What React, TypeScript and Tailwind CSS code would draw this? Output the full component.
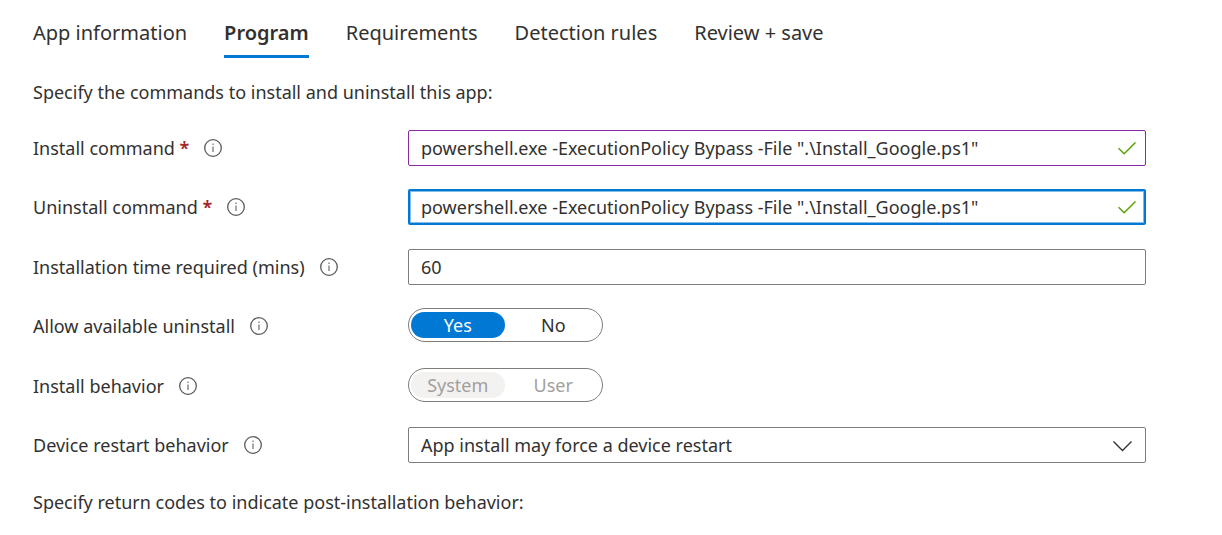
import { useState } from "react";
import type { ReactNode } from "react";

const tabs = ["App information", "Program", "Requirements", "Detection rules", "Review + save"];

function InfoIcon() {
  return (
    <svg width="18" height="18" viewBox="0 0 18 18" fill="none" aria-hidden="true">
      <circle cx="9" cy="9" r="8.3" stroke="#5c5a58" strokeWidth="1.3" />
      <path d="M9 7.5V13" stroke="#7a7876" strokeWidth="1.3" />
      <path d="M9 4.5V6" stroke="#7a7876" strokeWidth="1.3" />
    </svg>
  );
}

function CheckIcon() {
  return (
    <svg
      className="pointer-events-none absolute top-3 right-2.5"
      width="18"
      height="13"
      viewBox="0 0 18 13"
      fill="none"
      aria-hidden="true"
    >
      <path d="M0.5 6.3L6.2 11.8L17.5 0.5" stroke="#57a300" strokeWidth="1.5" />
    </svg>
  );
}

type RowProps = {
  label: string;
  htmlFor?: string;
  required?: boolean;
  children: ReactNode;
};

function Row({ label, htmlFor, required, children }: RowProps) {
  return (
    <div className="flex h-9">
      <div className="flex w-[375px] shrink-0 items-center">
        <label htmlFor={htmlFor}>
          {label}
          {required && <span className="font-semibold text-[#a4262c]"> *</span>}
        </label>
        <button type="button" aria-label={`About ${label}`} className="ml-[15px]">
          <InfoIcon />
        </button>
      </div>
      <div className="relative flex-1">{children}</div>
    </div>
  );
}

type ToggleProps = {
  name: string;
  label: string;
  options: string[];
  disabled?: boolean;
};

function Toggle({ name, label, options, disabled }: ToggleProps) {
  const [value, setValue] = useState(options[0]);

  return (
    <div
      role="radiogroup"
      aria-label={label}
      className="grid h-[34px] w-[195px] grid-cols-2 gap-0.5 rounded-full border border-[#7f7d7b] px-0.5 py-[3px]"
    >
      {options.map((option) => (
        <label
          key={option}
          className="relative flex items-center justify-center rounded-full has-checked:bg-[#0078d4] has-checked:text-white has-disabled:text-[#a19f9d] has-checked:has-disabled:bg-[#f3f2f1] has-checked:has-disabled:text-[#a19f9d]"
        >
          <input
            type="radio"
            name={name}
            className="sr-only"
            disabled={disabled}
            checked={value === option}
            onChange={() => setValue(option)}
          />
          {option}
        </label>
      ))}
    </div>
  );
}

export default function App() {
  const [install, setInstall] = useState('powershell.exe -ExecutionPolicy Bypass -File ".\\Install_Google.ps1"');
  const [uninstall, setUninstall] = useState('powershell.exe -ExecutionPolicy Bypass -File ".\\Install_Google.ps1"');
  const [minutes, setMinutes] = useState("60");

  return (
    <main className="bg-white pr-[76px] pb-5 pl-[33px] font-['Segoe_UI','Noto_Sans',sans-serif] text-[18px] leading-6 text-[#323130]">
      <nav className="flex gap-[37px] pt-[21px] text-[20px]">
        {tabs.map((tab) => (
          <a
            key={tab}
            href="#"
            className={
              tab === "Program"
                ? "border-b-3 border-[#0078d4] pb-2.5 font-semibold"
                : "border-b-3 border-transparent pb-2.5"
            }
          >
            {tab}
          </a>
        ))}
      </nav>

      <p className="mt-[22px]">Specify the commands to install and uninstall this app:</p>

      <form className="mt-[26px] flex flex-col gap-6">
        <div className="flex flex-col gap-[23px]">
          <Row label="Install command" htmlFor="install" required>
            <input
              id="install"
              className="h-9 w-full rounded-xs border border-[#8a2da5] pr-10 pl-3 outline-none"
              value={install}
              onChange={(e) => setInstall(e.target.value)}
            />
            <CheckIcon />
          </Row>
          <Row label="Uninstall command" htmlFor="uninstall" required>
            <input
              id="uninstall"
              className="h-9 w-full rounded-xs border-2 border-[#0078d4] pr-10 pl-[11px] inset-shadow-[0_0_0_1px_#80bbe9] outline-none"
              value={uninstall}
              onChange={(e) => setUninstall(e.target.value)}
            />
            <CheckIcon />
          </Row>
        </div>
        <div className="flex flex-col gap-[23px]">
          <Row label="Installation time required (mins)" htmlFor="minutes">
            <input
              id="minutes"
              className="h-9 w-full rounded-xs border border-[#7f7d7b] px-3 outline-none"
              value={minutes}
              onChange={(e) => setMinutes(e.target.value)}
            />
          </Row>
          <Row label="Allow available uninstall">
            <Toggle name="allow-uninstall" label="Allow available uninstall" options={["Yes", "No"]} />
          </Row>
        </div>
        <div className="flex flex-col gap-[23px]">
          <Row label="Install behavior">
            <Toggle name="install-behavior" label="Install behavior" options={["System", "User"]} disabled />
          </Row>
          <Row label="Device restart behavior" htmlFor="restart">
            <select
              id="restart"
              className="h-9 w-full appearance-none rounded-xs border border-[#7f7d7b] bg-white pr-10 pl-3 outline-none"
            >
              <option>App install may force a device restart</option>
            </select>
            <svg
              className="pointer-events-none absolute top-3.5 right-3.5"
              width="19"
              height="11"
              viewBox="0 0 19 11"
              fill="none"
              aria-hidden="true"
            >
              <path d="M0.5 0.5L9.5 9.5L18.5 0.5" stroke="#323130" strokeWidth="1.4" />
            </svg>
          </Row>
        </div>
      </form>

      <p className="mt-[27px]">Specify return codes to indicate post-installation behavior:</p>
    </main>
  );
}
